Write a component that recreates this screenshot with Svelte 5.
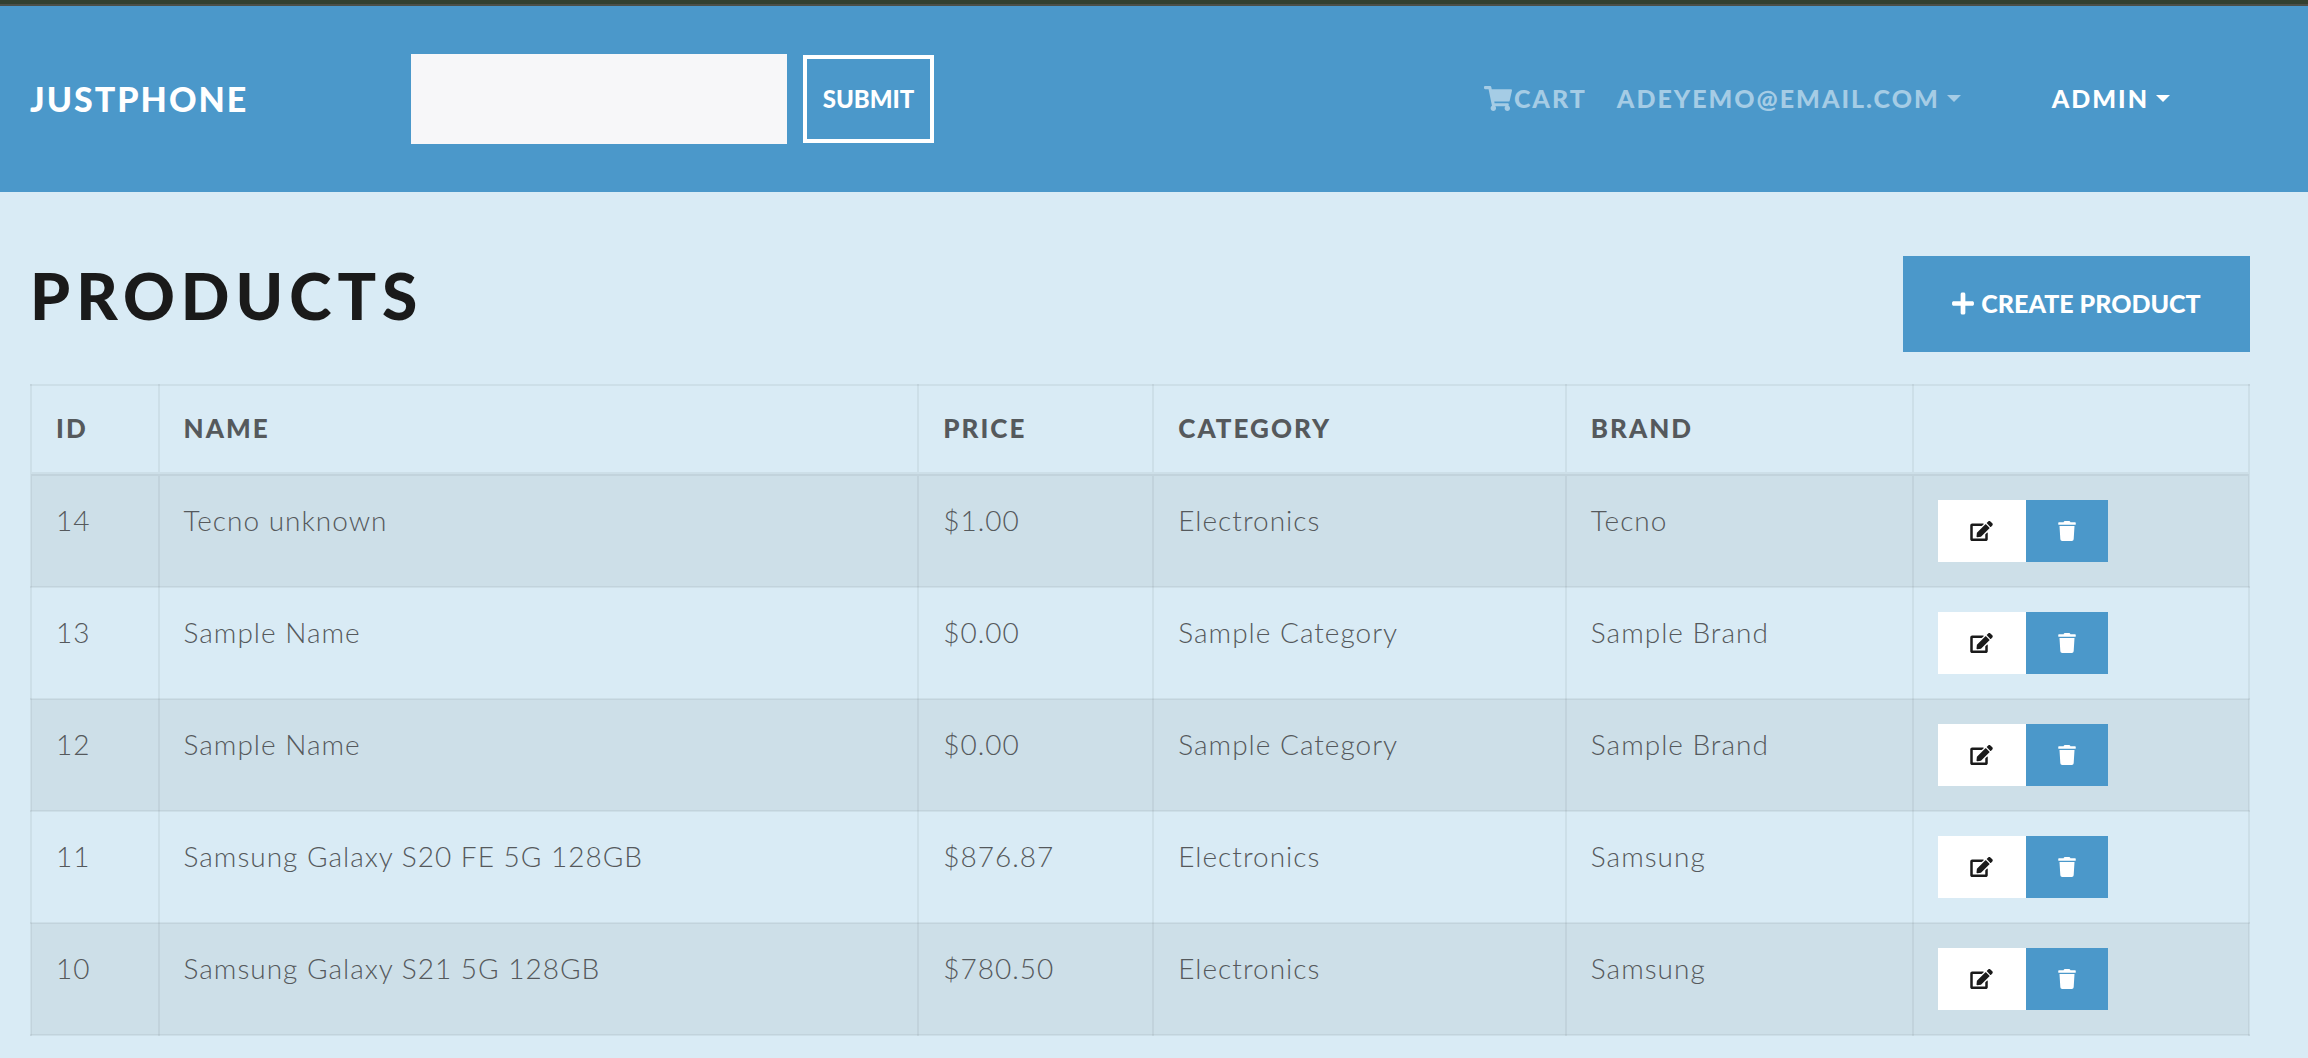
<script>
  const products = [
    { id: 14, name: 'Tecno unknown', price: '$1.00', category: 'Electronics', brand: 'Tecno' },
    { id: 13, name: 'Sample Name', price: '$0.00', category: 'Sample Category', brand: 'Sample Brand' },
    { id: 12, name: 'Sample Name', price: '$0.00', category: 'Sample Category', brand: 'Sample Brand' },
    { id: 11, name: 'Samsung Galaxy S20 FE 5G 128GB', price: '$876.87', category: 'Electronics', brand: 'Samsung' },
    { id: 10, name: 'Samsung Galaxy S21 5G 128GB', price: '$780.50', category: 'Electronics', brand: 'Samsung' }
  ];
</script>

<div class="strip"></div>
<header>
  <a class="brand" href="#home">JUSTPHONE</a>
  <form class="search" onsubmit={(e) => e.preventDefault()}>
    <input type="text" aria-label="Search products" />
    <button type="submit">SUBMIT</button>
  </form>
  <nav>
    <a class="cart" href="#cart">
      <svg viewBox="0 0 576 512" aria-hidden="true"><path d="M528.12 301.319l47.273-208C578.806 78.301 567.391 64 551.99 64H159.208l-9.166-44.81C147.758 8.021 137.93 0 126.529 0H24C10.745 0 0 10.745 0 24v16c0 13.255 10.745 24 24 24h69.883l70.248 343.435C147.325 417.1 136 435.222 136 456c0 30.928 25.072 56 56 56s56-25.072 56-56c0-15.674-6.447-29.835-16.824-40h209.647C430.447 426.165 424 440.326 424 456c0 30.928 25.072 56 56 56s56-25.072 56-56c0-22.172-12.888-41.332-31.579-50.405l5.517-24.276c3.413-15.018-8.002-29.319-23.403-29.319H218.117l-6.545-32h293.145c11.206 0 20.92-7.754 23.403-18.681z" /></svg>CART</a>
    <button class="menu" type="button">ADEYEMO@EMAIL.COM<span class="caret"></span></button>
    <button class="menu admin" type="button">ADMIN<span class="caret"></span></button>
  </nav>
</header>

<main>
  <div class="title">
    <h1>PRODUCTS</h1>
    <button class="create" type="button">
      <svg viewBox="0 0 448 512" aria-hidden="true"><path d="M416 208H272V64c0-17.67-14.33-32-32-32h-32c-17.67 0-32 14.33-32 32v144H32c-17.67 0-32 14.33-32 32v32c0 17.67 14.33 32 32 32h144v144c0 17.67 14.33 32 32 32h32c17.67 0 32-14.33 32-32V304h144c17.67 0 32-14.33 32-32v-32c0-17.67-14.33-32-32-32z" /></svg>
      CREATE PRODUCT
    </button>
  </div>

  <table>
    <colgroup>
      <col class="c-id" /><col class="c-name" /><col class="c-price" /><col class="c-category" /><col class="c-brand" /><col />
    </colgroup>
    <thead>
      <tr><th>ID</th><th>NAME</th><th>PRICE</th><th>CATEGORY</th><th>BRAND</th><th></th></tr>
    </thead>
    <tbody>
      {#each products as p (p.id)}
        <tr>
          <td>{p.id}</td>
          <td>{p.name}</td>
          <td>{p.price}</td>
          <td>{p.category}</td>
          <td>{p.brand}</td>
          <td>
            <div class="actions">
              <button class="edit" type="button" aria-label="Edit product {p.id}">
                <svg viewBox="0 0 576 512" aria-hidden="true"><path d="M402.6 83.2l90.2 90.2c3.8 3.8 3.8 10 0 13.8L274.4 405.6l-92.8 10.3c-12.4 1.4-22.9-9.1-21.5-21.5l10.3-92.8L388.8 83.2c3.8-3.8 10-3.8 13.8 0zm162-22.9l-48.8-48.8c-15.2-15.2-39.9-15.2-55.2 0l-35.4 35.4c-3.8 3.8-3.8 10 0 13.8l90.2 90.2c3.8 3.8 10 3.8 13.8 0l35.4-35.4c15.2-15.3 15.2-40 0-55.2zM384 346.2V448H64V128h229.8c3.2 0 6.2-1.3 8.5-3.5l40-40c7.6-7.6 2.2-20.5-8.5-20.5H48C21.5 64 0 85.5 0 112v352c0 26.5 21.5 48 48 48h352c26.5 0 48-21.5 48-48V306.2c0-10.7-12.9-16-20.5-8.5l-40 40c-2.2 2.3-3.5 5.3-3.5 8.5z" /></svg>
              </button>
              <button class="delete" type="button" aria-label="Delete product {p.id}">
                <svg viewBox="0 0 448 512" aria-hidden="true"><path d="M432 32H312l-9.4-18.7A24 24 0 0 0 281.1 0H166.8a23.72 23.72 0 0 0-21.4 13.3L136 32H16A16 16 0 0 0 0 48v32a16 16 0 0 0 16 16h416a16 16 0 0 0 16-16V48a16 16 0 0 0-16-16zM53.2 467a48 48 0 0 0 47.9 45h245.8a48 48 0 0 0 47.9-45L416 128H32z" /></svg>
              </button>
            </div>
          </td>
        </tr>
      {/each}
    </tbody>
  </table>
</main>

<style>
  :global(body) {
    margin: 0;
    background: #d9ebf5;
    color: #55595c;
    font-family: 'Gill Sans', Lato, 'Open Sans', sans-serif;
    font-size: 28px;
    font-weight: 300;
  }
  button, input {
    font: inherit;
    border: 0;
    border-radius: 0;
    margin: 0;
  }
  button { cursor: pointer; }
  svg { fill: currentColor; display: block; }

  .strip {
    height: 4px;
    background: #33402f;
    border-bottom: 2px solid #4b4f48;
  }
  header {
    display: flex;
    align-items: center;
    box-sizing: border-box;
    min-height: 186px;
    padding: 48px 138px 48px 30px;
    background: #4b98ca;
    color: #fff;
    font-size: 25px;
    font-weight: 900;
  }
  a { color: inherit; text-decoration: none; }
  .brand {
    width: 381px;
    padding-bottom: 2px;
    font-size: 34px;
    letter-spacing: 2px;
  }
  .search { display: flex; align-items: center; gap: 16px; }
  .search input {
    box-sizing: border-box;
    width: 376px;
    height: 90px;
    padding: 0 24px;
    background: #f7f7f9;
    color: #55595c;
  }
  .search button {
    box-sizing: border-box;
    width: 131px;
    height: 88px;
    padding: 0 0 2px;
    border: 4px solid #fff;
    background: transparent;
    color: #fff;
    font-size: 24px;
  }
  nav {
    display: flex;
    align-items: center;
    margin-left: auto;
    padding-bottom: 2px;
    letter-spacing: 2px;
  }
  .cart { display: flex; align-items: center; gap: 2px; margin-right: 30px; color: #a5cce5; }
  .cart svg { width: 28px; height: 25px; }
  .menu {
    display: flex;
    align-items: center;
    gap: 7px;
    padding: 0;
    background: transparent;
    color: #a5cce5;
    letter-spacing: inherit;
  }
  .admin { margin-left: 91px; color: #fff; }
  .caret {
    border: 7px solid transparent;
    border-top-color: currentColor;
    border-bottom: 0;
  }

  main { padding: 64px 58px 24px 30px; }
  .title {
    display: flex;
    justify-content: space-between;
    align-items: flex-start;
    margin-bottom: 32px;
  }
  h1 {
    margin: 0;
    color: #1a1a1a;
    font-size: 64px;
    line-height: 80px;
    font-weight: 900;
    letter-spacing: 6px;
  }
  .create {
    display: flex;
    align-items: center;
    justify-content: center;
    gap: 7px;
    box-sizing: border-box;
    min-width: 347px;
    height: 96px;
    padding: 0 48px 2px;
    background: #4b98ca;
    color: #fff;
    font-size: 25px;
    font-weight: 900;
  }
  .create svg { width: 22px; height: 25px; }

  table {
    width: 100%;
    table-layout: fixed;
    border-collapse: collapse;
    letter-spacing: 1px;
  }
  .c-id { width: 5.75%; }
  .c-name { width: 34.25%; }
  .c-price { width: 10.6%; }
  .c-category { width: 18.6%; }
  .c-brand { width: 15.65%; }
  th, td {
    padding: 24px;
    border: 2px solid rgba(0, 0, 0, 0.05);
    text-align: left;
    vertical-align: top;
    line-height: 40px;
  }
  th {
    padding: 20px 24px 22px;
    border-bottom-width: 4px;
    font-size: 26px;
    font-weight: 900;
    line-height: 44px;
    letter-spacing: 2px;
  }
  tbody tr:nth-child(odd) { background: rgba(0, 0, 0, 0.05); }
  .actions { display: flex; }
  .actions button {
    display: flex;
    align-items: center;
    justify-content: center;
    height: 62px;
    padding: 0;
  }
  .edit { width: 88px; background: #fff; color: #1a1a1a; }
  .edit svg { width: 23px; height: 20px; }
  .delete { width: 82px; background: #4b98ca; color: #fff; }
  .delete svg { width: 18px; height: 20px; }
</style>
